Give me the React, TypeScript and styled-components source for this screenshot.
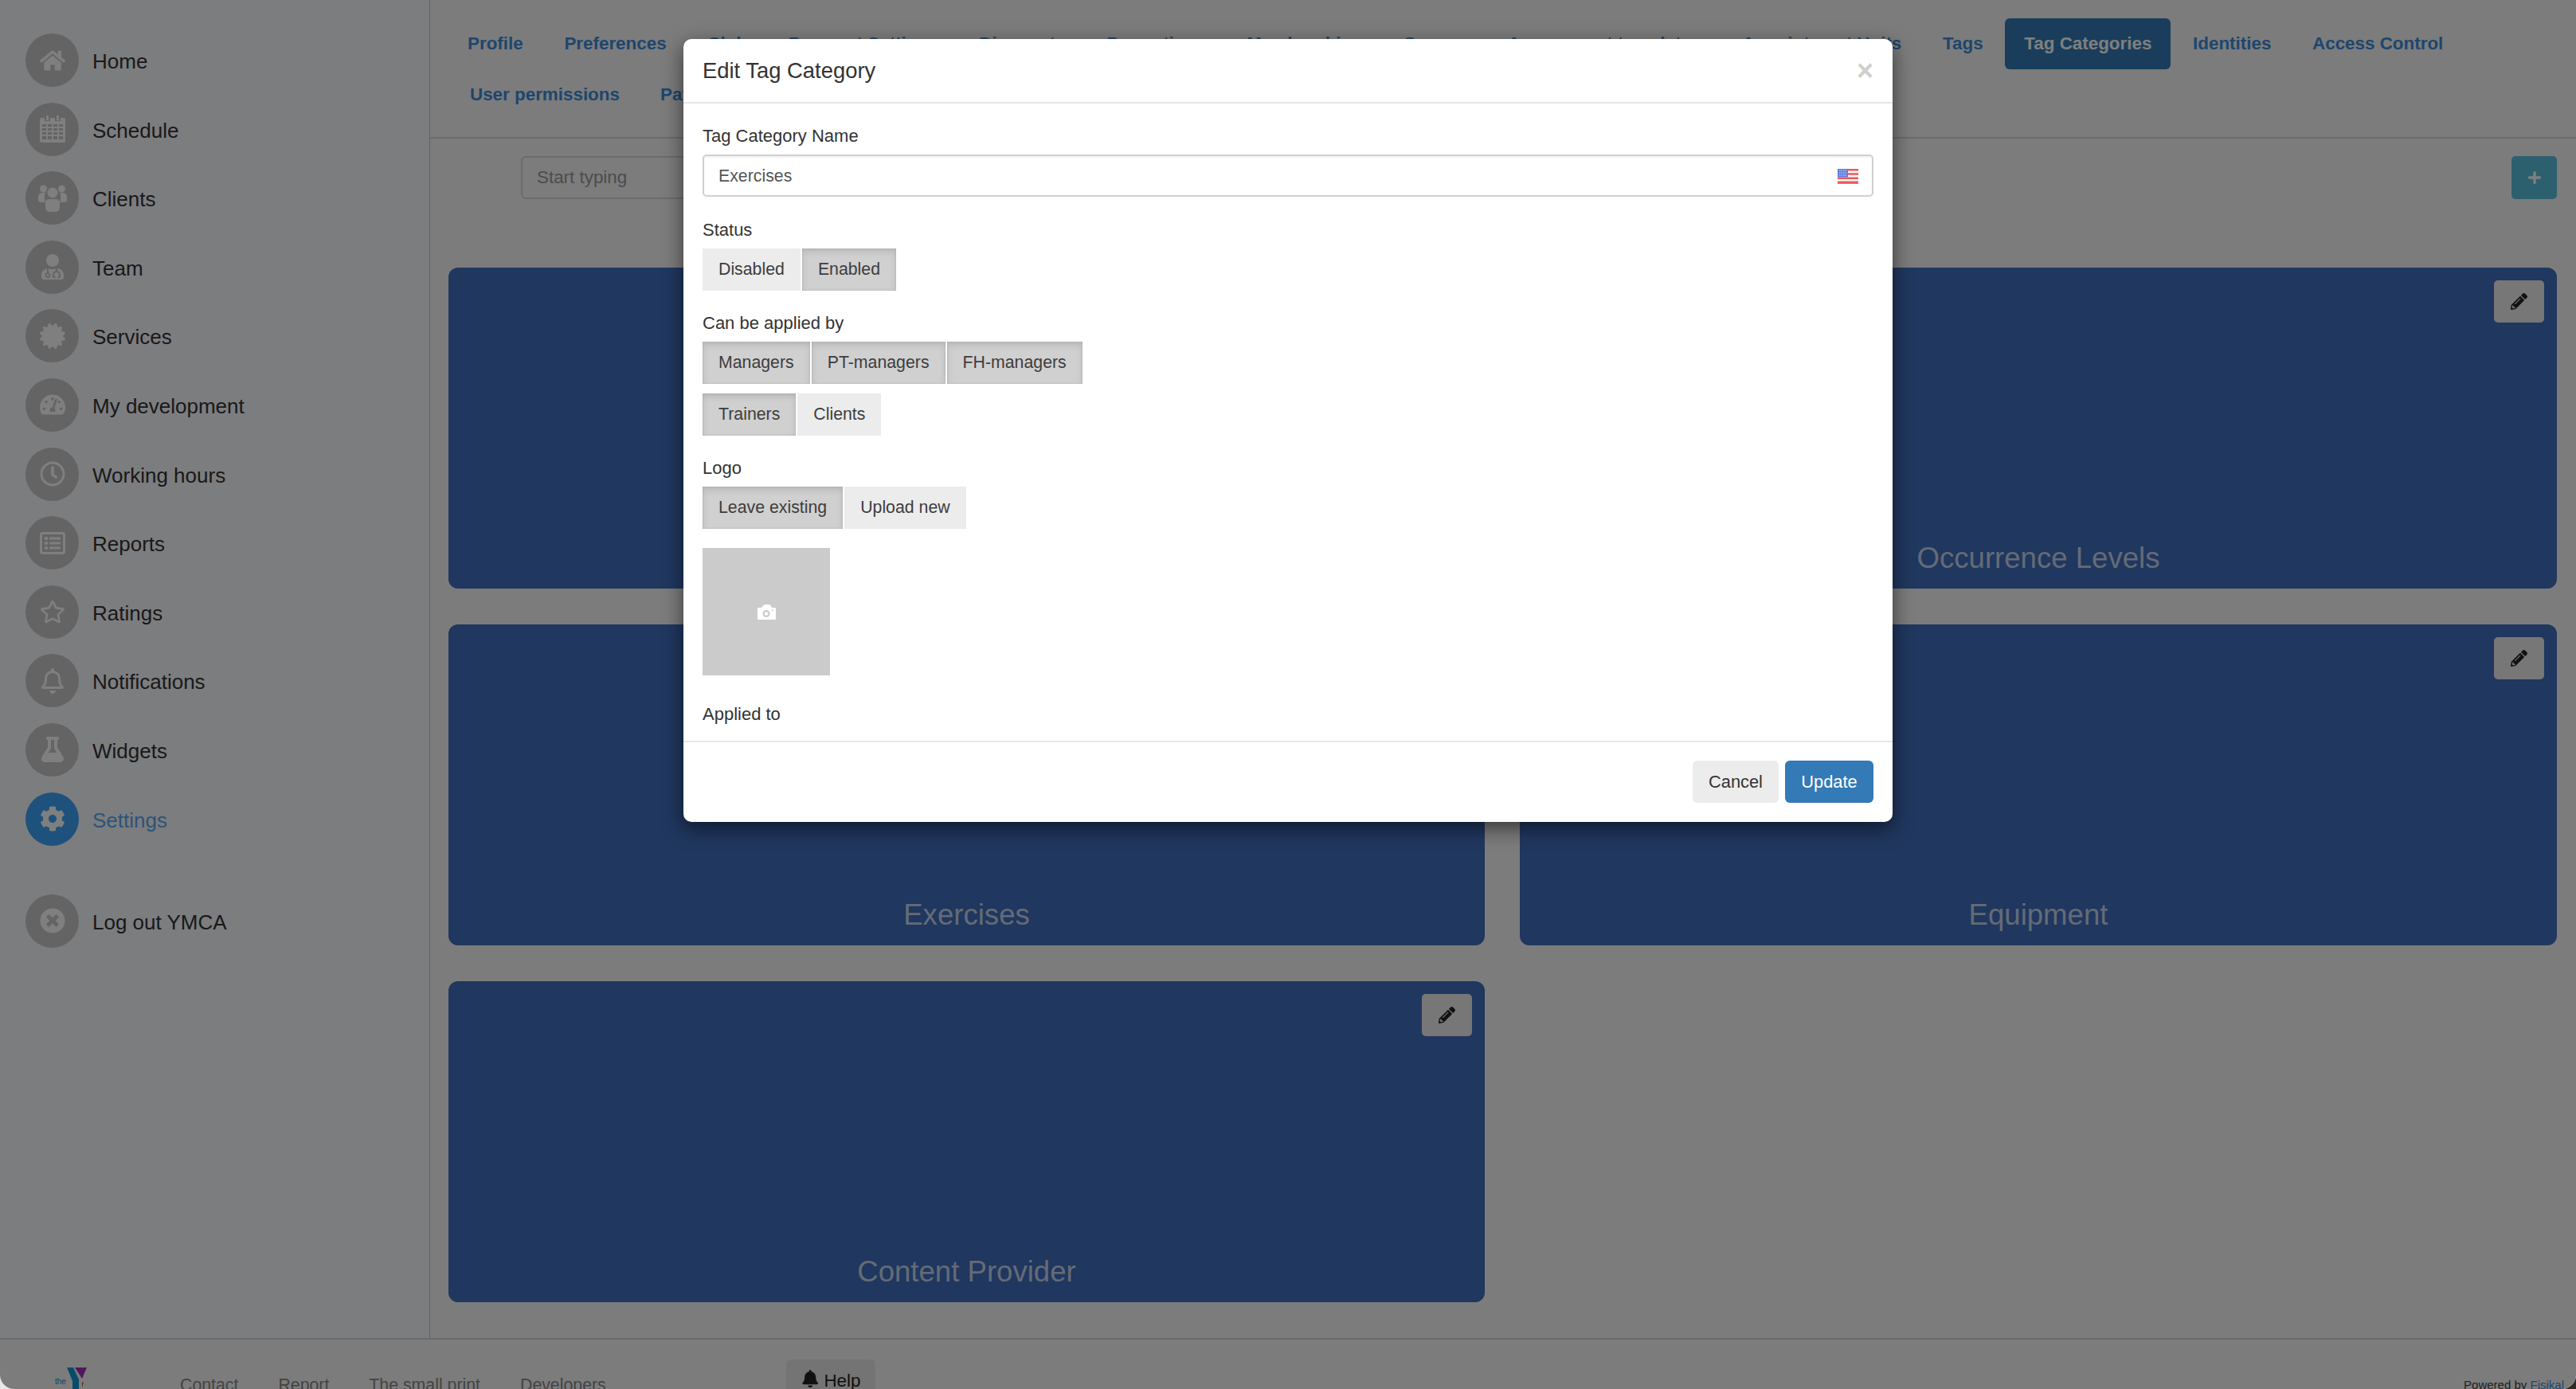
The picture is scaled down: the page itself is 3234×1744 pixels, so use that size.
import React from "react";
import styled, { createGlobalStyle } from "styled-components";
import {
  FaHome, FaUserMd, FaCertificate, FaTachometerAlt, FaRegClock, FaRegListAlt,
  FaRegStar, FaRegBell, FaFlask, FaCog, FaTimesCircle, FaBell, FaPencilAlt, FaPlus,
} from "react-icons/fa";

const Global = createGlobalStyle`
  html, body { margin: 0; padding: 0; height: 1744px; overflow: hidden; }
  body {
    background: linear-gradient(to right, #e8e8e8 50%, #2c2c22 50%);
    font-family: "Liberation Sans", Arial, sans-serif;
  }
  * { box-sizing: border-box; }
`;

const Viewport = styled.div`
  position: relative;
  width: 3234px;
  height: 1744px;
  overflow: hidden;
  border-radius: 0 0 18px 18px;
  background: #f8f8f8;
  display: flex;
  flex-direction: column;
`;
const Upper = styled.div`
  display: flex;
  height: 1680px;
  flex: none;
`;
const Sidebar = styled.nav`
  width: 540px;
  flex: none;
  background: #f8fafe;
  border-right: 1px solid #c8c8c8;
  padding: 42px 0 0 32px;
  display: flex;
  flex-direction: column;
  gap: 19.6px;
`;
const SideItem = styled.div<{ $gapAbove?: boolean }>`
  display: flex;
  align-items: center;
  gap: 17px;
  height: 67px;
  margin-top: ${(p) => (p.$gapAbove ? "41.4px" : "0")};
`;
const Circle = styled.span<{ $active?: boolean }>`
  width: 67px;
  height: 67px;
  border-radius: 50%;
  flex: none;
  background: ${(p) => (p.$active ? "#3ea2fa" : "#c8c8c8")};
  color: #fff;
  display: flex;
  align-items: center;
  justify-content: center;
  font-size: 32px;
`;
const SideLabel = styled.span<{ $active?: boolean }>`
  font-size: 26px;
  padding-top: 4px;
  color: ${(p) => (p.$active ? "#5aa8f0" : "#333333")};
`;
const Main = styled.main`
  flex: 1;
  display: flex;
  flex-direction: column;
  min-width: 0;
`;
const TabBar = styled.div`
  height: 174px;
  flex: none;
  border-bottom: 2px solid #d6d6d6;
  padding: 23px 0 0 23px;
`;
const TabRow = styled.div<{ $indent?: number; $gap?: number }>`
  display: flex;
  gap: ${(p) => p.$gap ?? 3.2}px;
  height: 64px;
  padding-left: ${(p) => p.$indent ?? 0}px;
`;
const Tab = styled.a<{ $active?: boolean }>`
  display: flex;
  align-items: center;
  padding: 0 24px;
  height: 64px;
  border-radius: 6px;
  font-size: 22.4px;
  font-weight: 700;
  white-space: nowrap;
  background: ${(p) => (p.$active ? "#337ab7" : "transparent")};
  color: ${(p) => (p.$active ? "#fff" : "#3c8cdc")};
`;
const Tools = styled.div`
  display: flex;
  justify-content: space-between;
  padding: 22px 24px 0 114px;
  height: 76px;
  flex: none;
`;
const Search = styled.div`
  width: 1400px;
  height: 54px;
  border: 2px solid #d8d8d8;
  border-radius: 6px;
  padding: 0 18px;
  display: flex;
  align-items: center;
  font-size: 22.4px;
  color: #999;
`;
const AddButton = styled.button`
  width: 57px;
  height: 54px;
  border: none;
  border-radius: 5px;
  background: #5bc0de;
  color: #fff;
  font-size: 18px;
  display: flex;
  align-items: center;
  justify-content: center;
  padding: 0;
`;
const CardGrid = styled.div`
  display: grid;
  grid-template-columns: 1301px 1302px;
  grid-auto-rows: 403px;
  column-gap: 44px;
  row-gap: 45px;
  margin: 86px 0 0 23px;
`;
const Card = styled.article`
  position: relative;
  border-radius: 12px;
  background: #406ebf;
  display: flex;
  flex-direction: column;
  justify-content: flex-end;
  align-items: center;
  padding-bottom: 16px;
`;
const CardTitle = styled.h3`
  margin: 0;
  font-size: 36.6px;
  line-height: 44px;
  font-weight: 400;
  color: rgba(255, 255, 255, 0.72);
`;
const EditButton = styled.button`
  position: absolute;
  top: 16px;
  right: 16px;
  width: 63px;
  height: 53px;
  border: none;
  border-radius: 5px;
  background: #eeeeee;
  color: #222;
  font-size: 21px;
  display: flex;
  align-items: center;
  justify-content: center;
  padding: 0;
`;
const Footer = styled.footer`
  flex: 1;
  border-top: 2px solid #d6d6d6;
  background: #f8f8f8;
  display: flex;
  align-items: flex-start;
  position: relative;
`;
const LogoWrap = styled.div`
  width: 226px;
  flex: none;
  padding: 35px 0 0 69px;
  display: flex;
  align-items: flex-start;
  gap: 1px;
`;
const LogoThe = styled.span`
  font-size: 10px;
  line-height: 12px;
  margin-top: 12px;
  color: #1f86c8;
`;
const FootLinks = styled.div`
  display: flex;
  gap: 50px;
  padding-top: 43px;
  width: 761px;
  flex: none;
  font-size: 21.3px;
  line-height: 28px;
  color: #888;
`;
const HelpButton = styled.div`
  width: 112px;
  height: 70px;
  margin-top: 25px;
  border-radius: 6px;
  background: #e8e8e8;
  color: #222;
  display: flex;
  align-items: flex-start;
  gap: 6px;
  padding: 13px 0 0 19px;
  font-size: 22.4px;
  line-height: 28px;
`;
const Powered = styled.div`
  margin-left: auto;
  padding: 46px 15px 0 0;
  font-size: 15px;
  line-height: 22px;
  color: #444;
  span { color: #3c8cdc; }
`;

const Backdrop = styled.div`
  position: absolute;
  inset: 0;
  background: rgba(0, 0, 0, 0.5);
  display: flex;
  justify-content: center;
  align-items: flex-start;
  padding-top: 49px;
`;
const Modal = styled.section`
  width: 1518px;
  height: 983px;
  background: #fff;
  border-radius: 10px;
  box-shadow: 0 8px 26px rgba(0, 0, 0, 0.55);
  display: flex;
  flex-direction: column;
`;
const ModalHeader = styled.header`
  height: 81px;
  flex: none;
  border-bottom: 2px solid #e6e6e6;
  padding: 0 24px;
  display: flex;
  align-items: center;
  justify-content: space-between;
`;
const ModalTitle = styled.h2`
  margin: 0;
  font-size: 27.4px;
  font-weight: 400;
  color: #333;
`;
const CloseMark = styled.span`
  font-size: 36px;
  font-weight: 700;
  line-height: 38px;
  color: #cfcfcf;
`;
const ModalBody = styled.div`
  flex: 1;
  padding: 25px 24px 0;
  overflow: hidden;
`;
const Label = styled.div<{ $top?: number }>`
  font-size: 22px;
  line-height: 32px;
  color: #333;
  margin-top: ${(p) => p.$top ?? 0}px;
  margin-bottom: 7px;
`;
const NameField = styled.div`
  height: 53px;
  border: 2px solid #d0d0d0;
  border-radius: 5px;
  box-shadow: inset 0 2px 2px rgba(0, 0, 0, 0.05);
  padding: 2px 17px 0 18px;
  display: flex;
  align-items: center;
  justify-content: space-between;
  font-size: 21.3px;
  color: #555;
`;
const ChoiceRow = styled.div<{ $top?: number }>`
  display: flex;
  gap: 2px;
  margin-top: ${(p) => p.$top ?? 0}px;
`;
const Choice = styled.button<{ $on?: boolean }>`
  height: 53px;
  padding: 0 20px;
  border: none;
  font: inherit;
  font-size: 21.3px;
  color: #3d3d3d;
  background: ${(p) => (p.$on ? "#d0d0d0" : "#ececec")};
  box-shadow: ${(p) => (p.$on ? "inset 0 4px 8px rgba(0,0,0,0.125), inset 0 0 2px rgba(0,0,0,0.15)" : "none")};
`;
const LogoBox = styled.div`
  width: 160px;
  height: 160px;
  margin-top: 24px;
  background: #cbcbcb;
  display: flex;
  align-items: center;
  justify-content: center;
`;
const ModalFooter = styled.footer`
  height: 102px;
  flex: none;
  border-top: 2px solid #e6e6e6;
  padding: 23px 24px 0;
  display: flex;
  justify-content: flex-end;
  align-items: flex-start;
  gap: 8px;
`;
const FootButton = styled.button<{ $primary?: boolean }>`
  height: 53px;
  border: none;
  border-radius: 6px;
  font: inherit;
  font-size: 21.8px;
  padding: 0;
  width: ${(p) => (p.$primary ? "111px" : "108px")};
  background: ${(p) => (p.$primary ? "#337ab7" : "#ececec")};
  color: ${(p) => (p.$primary ? "#fff" : "#333")};
`;

const CalendarIcon = () => (
  <svg width="32" height="34" viewBox="0 0 32 34" fill="currentColor" fillRule="evenodd">
    <path d="M8 0h3v6H8zM21 0h3v6h-3z" />
    <path d="M2 3h4v4h7V3h6v4h7V3h4a2 2 0 0 1 2 2v27a2 2 0 0 1-2 2H2a2 2 0 0 1-2-2V5a2 2 0 0 1 2-2zM3 11v3h5v-3zm7 0v3h5v-3zm7 0v3h5v-3zm7 0v3h5v-3zM3 16v3h5v-3zm7 0v3h5v-3zm7 0v3h5v-3zm7 0v3h5v-3zM3 21v3h5v-3zm7 0v3h5v-3zm7 0v3h5v-3zm7 0v3h5v-3zM3 26v4h5v-4zm7 0v4h5v-4zm7 0v4h5v-4zm7 0v4h5v-4z" />
  </svg>
);

const PeopleIcon = () => (
  <svg width="36" height="34" viewBox="0 0 36 34" fill="currentColor">
    <circle cx="6.5" cy="5" r="4.5" />
    <circle cx="29.5" cy="5" r="4.5" />
    <path d="M0 19v-4q0-5 6-5h3q-1 2-1 4v5q0 2 2 3H4q-4 0-4-3zM36 19v-4q0-5-6-5h-3q1 2 1 4v5q0 2-2 3h6q4 0 4-3z" />
    <circle cx="18" cy="10" r="6.5" />
    <path d="M9 28v-5q0-5 5-5h8q5 0 5 5v5q0 6-6 6h-6q-6 0-6-6z" />
  </svg>
);

const FlagIcon = () => (
  <svg width="26" height="19" viewBox="0 0 26 19">
    <rect width="26" height="19" fill="#f4f4f4" />
    <path d="M0 0h26v2.6H0zM0 5.2h26v2.6H0zM0 10.4h26V13H0zM0 15.6h26V18H0z" fill="#ea5a5a" />
    <rect width="13" height="10.4" fill="#5a7ee0" />
    <path d="M2 2h9M2 5h9M2 8h9" stroke="#dfe8ff" strokeWidth="1" strokeDasharray="1.5 1" />
    <rect y="18" width="26" height="1" fill="#999" />
  </svg>
);

const CameraIcon = () => (
  <svg width="23" height="19" viewBox="0 0 23 19" fill="#fff" fillRule="evenodd">
    <path d="M1 4h4l2-2.5Q8 0 10 0h4q2 0 3 1.5L18 4h4a1 1 0 0 1 1 1v13a1 1 0 0 1-1 1H1a1 1 0 0 1-1-1V5a1 1 0 0 1 1-1zM11 7a4.5 4.5 0 1 0 0 9 4.5 4.5 0 0 0 0-9zm0 2.2a2.3 2.3 0 1 1 0 4.6 2.3 2.3 0 0 1 0-4.6zM19 6.5a1 1 0 1 0 0 2 1 1 0 0 0 0-2z" />
  </svg>
);

const YLogo = () => (
  <svg width="25" height="34" viewBox="0 0 25 34">
    <path d="M0 0h8l7 15v19H7V17z" fill="#0f9ad6" />
    <path d="M10 0h15l-6 14z" fill="#a030b8" />
    <path d="M19 19l2-1-2 7z" fill="#d03a3a" />
  </svg>
);

const nav = [
  { label: "Home", icon: <FaHome /> },
  { label: "Schedule", icon: <CalendarIcon /> },
  { label: "Clients", icon: <PeopleIcon /> },
  { label: "Team", icon: <FaUserMd /> },
  { label: "Services", icon: <FaCertificate /> },
  { label: "My development", icon: <FaTachometerAlt /> },
  { label: "Working hours", icon: <FaRegClock /> },
  { label: "Reports", icon: <FaRegListAlt /> },
  { label: "Ratings", icon: <FaRegStar /> },
  { label: "Notifications", icon: <FaRegBell /> },
  { label: "Widgets", icon: <FaFlask /> },
  { label: "Settings", icon: <FaCog />, active: true },
  { label: "Log out YMCA", icon: <FaTimesCircle />, gap: true },
];

const tabsOne = [
  "Profile", "Preferences", "Club", "Payment Settings", "Discounts", "Promotions", "Memberships",
  "Groups", "Assessment templates", "Appointment Units", "Tags", "Tag Categories", "Identities", "Access Control",
];

const cards = ["Difficulty Levels", "Occurrence Levels", "Exercises", "Equipment", "Content Provider"];

export default function App() {
  return (
    <>
      <Global />
      <Viewport>
        <Upper>
          <Sidebar>
            {nav.map((n) => (
              <SideItem key={n.label} $gapAbove={n.gap}>
                <Circle $active={n.active}>{n.icon}</Circle>
                <SideLabel $active={n.active}>{n.label}</SideLabel>
              </SideItem>
            ))}
          </Sidebar>
          <Main>
            <TabBar>
              <TabRow $gap={3.7}>
                {tabsOne.map((t) => (
                  <Tab key={t} $active={t === "Tag Categories"}>{t}</Tab>
                ))}
              </TabRow>
              <TabRow $indent={3}>
                <Tab>User permissions</Tab>
                <Tab>Payments</Tab>
              </TabRow>
            </TabBar>
            <Tools>
              <Search>Start typing</Search>
              <AddButton><FaPlus /></AddButton>
            </Tools>
            <CardGrid>
              {cards.map((c) => (
                <Card key={c}>
                  <EditButton><FaPencilAlt /></EditButton>
                  <CardTitle>{c}</CardTitle>
                </Card>
              ))}
            </CardGrid>
          </Main>
        </Upper>
        <Footer>
          <LogoWrap><LogoThe>the</LogoThe><YLogo /></LogoWrap>
          <FootLinks>
            <span>Contact</span>
            <span>Report</span>
            <span>The small print</span>
            <span>Developers</span>
          </FootLinks>
          <HelpButton><FaBell />Help</HelpButton>
          <Powered>Powered by <span>Fisikal</span></Powered>
        </Footer>
        <Backdrop>
          <Modal>
            <ModalHeader>
              <ModalTitle>Edit Tag Category</ModalTitle>
              <CloseMark>×</CloseMark>
            </ModalHeader>
            <ModalBody>
              <Label>Tag Category Name</Label>
              <NameField>Exercises<FlagIcon /></NameField>
              <Label $top={26}>Status</Label>
              <ChoiceRow>
                <Choice>Disabled</Choice>
                <Choice $on>Enabled</Choice>
              </ChoiceRow>
              <Label $top={25}>Can be applied by</Label>
              <ChoiceRow>
                <Choice $on>Managers</Choice>
                <Choice $on>PT-managers</Choice>
                <Choice $on>FH-managers</Choice>
              </ChoiceRow>
              <ChoiceRow $top={12}>
                <Choice $on>Trainers</Choice>
                <Choice>Clients</Choice>
              </ChoiceRow>
              <Label $top={25}>Logo</Label>
              <ChoiceRow>
                <Choice $on>Leave existing</Choice>
                <Choice>Upload new</Choice>
              </ChoiceRow>
              <LogoBox><CameraIcon /></LogoBox>
              <Label $top={33}>Applied to</Label>
            </ModalBody>
            <ModalFooter>
              <FootButton>Cancel</FootButton>
              <FootButton $primary>Update</FootButton>
            </ModalFooter>
          </Modal>
        </Backdrop>
      </Viewport>
    </>
  );
}
